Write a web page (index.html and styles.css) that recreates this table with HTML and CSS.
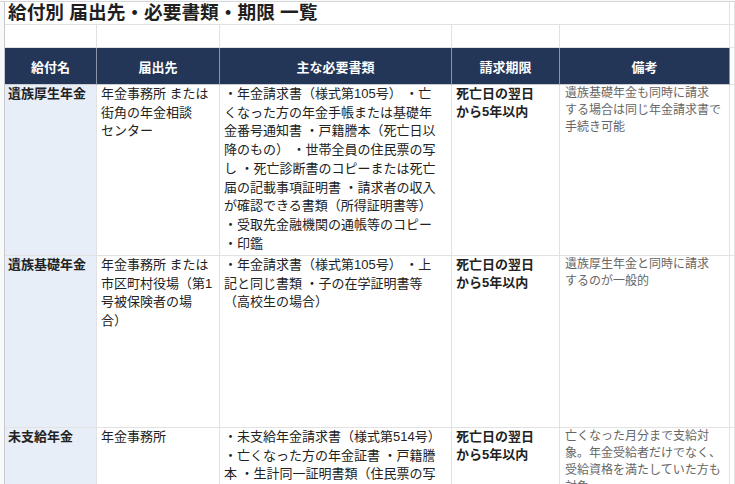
FILE: index.html
```html
<!DOCTYPE html>
<html lang="ja">
<head>
<meta charset="utf-8">
<title>給付別 届出先・必要書類・期限 一覧</title>
<link rel="stylesheet" href="styles.css">
</head>
<body>
<div class="topstrip"></div>
<div class="sheet">
  <div class="rowhead"></div>
  <div class="grid">
    <div class="cell title span5">給付別 届出先・必要書類・期限 一覧</div>
    <div class="cell"></div>

    <div class="cell"></div><div class="cell"></div><div class="cell"></div><div class="cell"></div><div class="cell"></div><div class="cell"></div>

    <div class="cell hd">給付名</div>
    <div class="cell hd">届出先</div>
    <div class="cell hd">主な必要書類</div>
    <div class="cell hd">請求期限</div>
    <div class="cell hd">備考</div>
    <div class="cell"></div>

    <div class="cell name">遺族厚生年金</div>
    <div class="cell txt">年金事務所 または<br>街角の年金相談<br>センター</div>
    <div class="cell txt">・年金請求書（様式第105号） ・亡<br>くなった方の年金手帳または基礎年<br>金番号通知書 ・戸籍謄本（死亡日以<br>降のもの） ・世帯全員の住民票の写<br>し ・死亡診断書のコピーまたは死亡<br>届の記載事項証明書 ・請求者の収入<br>が確認できる書類（所得証明書等）<br>・受取先金融機関の通帳等のコピー<br>・印鑑</div>
    <div class="cell due">死亡日の翌日<br>から5年以内</div>
    <div class="cell note">遺族基礎年金も同時に請求<br>する場合は同じ年金請求書で<br>手続き可能</div>
    <div class="cell"></div>

    <div class="cell name">遺族基礎年金</div>
    <div class="cell txt">年金事務所 または<br>市区町村役場（第1<br>号被保険者の場<br>合）</div>
    <div class="cell txt">・年金請求書（様式第105号） ・上<br>記と同じ書類 ・子の在学証明書等<br>（高校生の場合）</div>
    <div class="cell due">死亡日の翌日<br>から5年以内</div>
    <div class="cell note">遺族厚生年金と同時に請求<br>するのが一般的</div>
    <div class="cell"></div>

    <div class="cell name">未支給年金</div>
    <div class="cell txt">年金事務所</div>
    <div class="cell txt">・未支給年金請求書（様式第514号）<br>・亡くなった方の年金証書 ・戸籍謄<br>本 ・生計同一証明書類（住民票の写</div>
    <div class="cell due">死亡日の翌日<br>から5年以内</div>
    <div class="cell note">亡くなった月分まで支給対<br>象。年金受給者だけでなく、<br>受給資格を満たしていた方も<br>対象</div>
    <div class="cell"></div>
  </div>
</div>
</body>
</html>
```
FILE: styles.css
```css
html, body {
  margin: 0;
  padding: 0;
  background: #ffffff;
  overflow: hidden;
}
body {
  font-family: "Liberation Sans", "Noto Sans CJK JP", sans-serif;
  color: #222222;
  width: 735px;
  height: 484px;
}
.topstrip {
  height: 1px;
  background: #f8f9fa;
  border-bottom: 1px solid #d3d5d8;
}
.sheet {
  display: flex;
}
.rowhead {
  width: 4px;
  flex: none;
  background: #f8f9fa;
  border-right: 1px solid #c7c9cc;
}
.grid {
  flex: 1;
  display: grid;
  grid-template-columns: 92px 123px 232px 108px 170px 1fr;
  grid-template-rows: 23px 23px 37px 171px 172px 100px;
}
.cell {
  border-right: 1px solid #e2e2e2;
  border-bottom: 1px solid #e2e2e2;
  overflow: hidden;
  white-space: nowrap;
}
.span5 {
  grid-column: span 5;
}
.title {
  font-size: 18.7px;
  font-weight: 700;
  line-height: 22px;
  padding-left: 3px;
  color: #1f1f1f;
}
.hd {
  background: #243658;
  color: #ffffff;
  font-size: 13px;
  font-weight: 700;
  display: flex;
  align-items: center;
  justify-content: center;
  border-right-color: #8b94a5;
  border-bottom-color: #c9ccd1;
}
.name {
  background: #e8eef8;
  font-size: 13px;
  font-weight: 700;
  line-height: 18.7px;
  padding: 0 0 0 3px;
}
.txt {
  font-size: 13px;
  line-height: 18.7px;
  padding: 0 0 0 4px;
}
.due {
  font-size: 13px;
  font-weight: 700;
  line-height: 18px;
  padding: 0 0 0 4px;
}
.note {
  font-size: 12px;
  line-height: 17px;
  color: #666666;
  padding: 0 0 0 5px;
}
```
